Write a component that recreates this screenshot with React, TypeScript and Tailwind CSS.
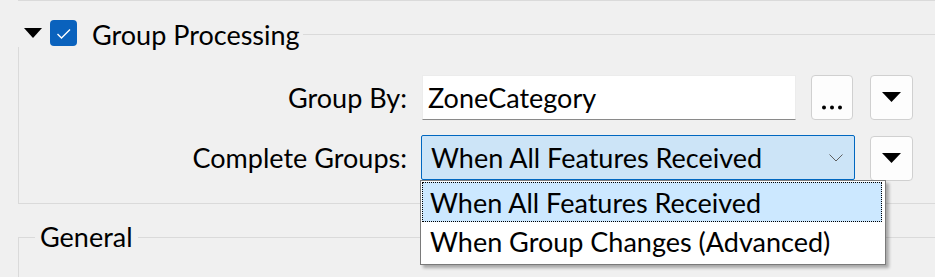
const line = 'border-[#dadada]'

function ArrowButton({ className = '' }: { className?: string }) {
  return (
    <button
      type="button"
      className={`flex h-[45px] w-[43px] items-center justify-center rounded-[4px] border border-[#d0d0d0] bg-[#fdfdfd] pb-[2px] ${className}`}
    >
      <svg width="19" height="10" viewBox="0 0 19 10">
        <polygon points="0,0 19,0 9.5,10" fill="#000" />
      </svg>
    </button>
  )
}

export default function App() {
  return (
    <div className="relative h-[277px] w-[935px] overflow-hidden bg-[#f0f0f0] font-['Lato',sans-serif] text-[27px] text-black">
      <div className={`ml-[18px] h-px border-t ${line}`} />

      {/* group header */}
      <div className="flex h-[46px] items-start">
        <svg className="ml-[24px] mt-[27px]" width="18" height="10" viewBox="0 0 18 10">
          <polygon points="0,0 18,0 9,10" fill="#000" />
        </svg>
        <div className="ml-[8px] mt-[19px] flex h-[26px] w-[27px] items-center justify-center rounded-[4px] bg-[#0a62bd]">
          <svg width="27" height="26" viewBox="0 0 27 26">
            <path d="M7.5 14 L11.5 18 L20 9.5" fill="none" stroke="#fff" strokeWidth="1.4" />
          </svg>
        </div>
        <span className="ml-[15px] mt-[18px] leading-[32px]">Group Processing</span>
        <div className={`ml-[3px] mt-[33px] flex-1 border-t ${line}`} />
      </div>

      {/* group body */}
      <div className={`ml-[18px] h-[157px] border-b border-l ${line} pt-[28px]`}>
        <div className="flex h-[45px] items-center">
          <div className="w-[388px] pt-[1px] text-right leading-[32px]">Group By:</div>
          <div className="ml-[15px] flex h-[45px] w-[374px] items-center border border-[#ececec] border-b-[#8a8a8a] bg-white pl-[5px] pt-[1px] leading-[32px]">
            ZoneCategory
          </div>
          <button
            type="button"
            className="ml-[15px] flex h-[45px] w-[42px] items-end justify-center rounded-[4px] border border-[#d0d0d0] bg-[#fdfdfd] pb-[9px]"
          >
            <svg width="22" height="5" viewBox="0 0 22 5">
              <circle cx="3" cy="2.5" r="2" fill="#000" />
              <circle cx="11" cy="2.5" r="2" fill="#000" />
              <circle cx="19" cy="2.5" r="2" fill="#000" />
            </svg>
          </button>
          <ArrowButton className="ml-[17px]" />
        </div>

        <div className="mt-[15px] flex h-[45px] items-start">
          <div className="flex h-[45px] w-[388px] items-center justify-end pt-[1px] leading-[32px]">Complete Groups:</div>
          <div className="ml-[14px] flex h-[45px] w-[434px] items-center justify-between rounded-[2px] border border-[#0067c0] bg-[#cce4f7] pl-[9px] pr-[11px] pt-[1px] leading-[32px]">
            <span>When All Features Received</span>
            <svg width="14" height="8" viewBox="0 0 14 8">
              <polyline points="0.5,0.5 7,7 13.5,0.5" fill="none" stroke="#5f5f5f" strokeWidth="1" />
            </svg>
          </div>
          <ArrowButton className="ml-[15px] mt-[1px]" />
        </div>
      </div>

      {/* General section */}
      <div className="ml-[18px] mt-[21px] flex h-[24px] items-start">
        <div className={`mt-[12px] h-[12px] w-[17px] border-l border-t ${line}`} />
        <span className="-mt-[4px] px-[5px] leading-[32px]">General</span>
        <div className={`mt-[12px] flex-1 border-t ${line}`} />
      </div>
      <div className={`ml-[18px] h-[40px] border-l ${line}`} />

      {/* open dropdown list */}
      <div className="absolute left-[420px] top-[180px] h-[85px] w-[466px] border border-[#7a7a7a] bg-white pl-[1px] pr-[3px] pt-[1px] shadow-[3px_3px_3px_rgba(0,0,0,0.3)]">
        <div className="flex h-[40px] items-center border border-dotted border-black bg-[#cce8ff] pl-[7px] pt-[1px] leading-[32px]">
          When All Features Received
        </div>
        <div className="flex h-[40px] items-center pl-[8px] leading-[32px]">When Group Changes (Advanced)</div>
      </div>
    </div>
  )
}
